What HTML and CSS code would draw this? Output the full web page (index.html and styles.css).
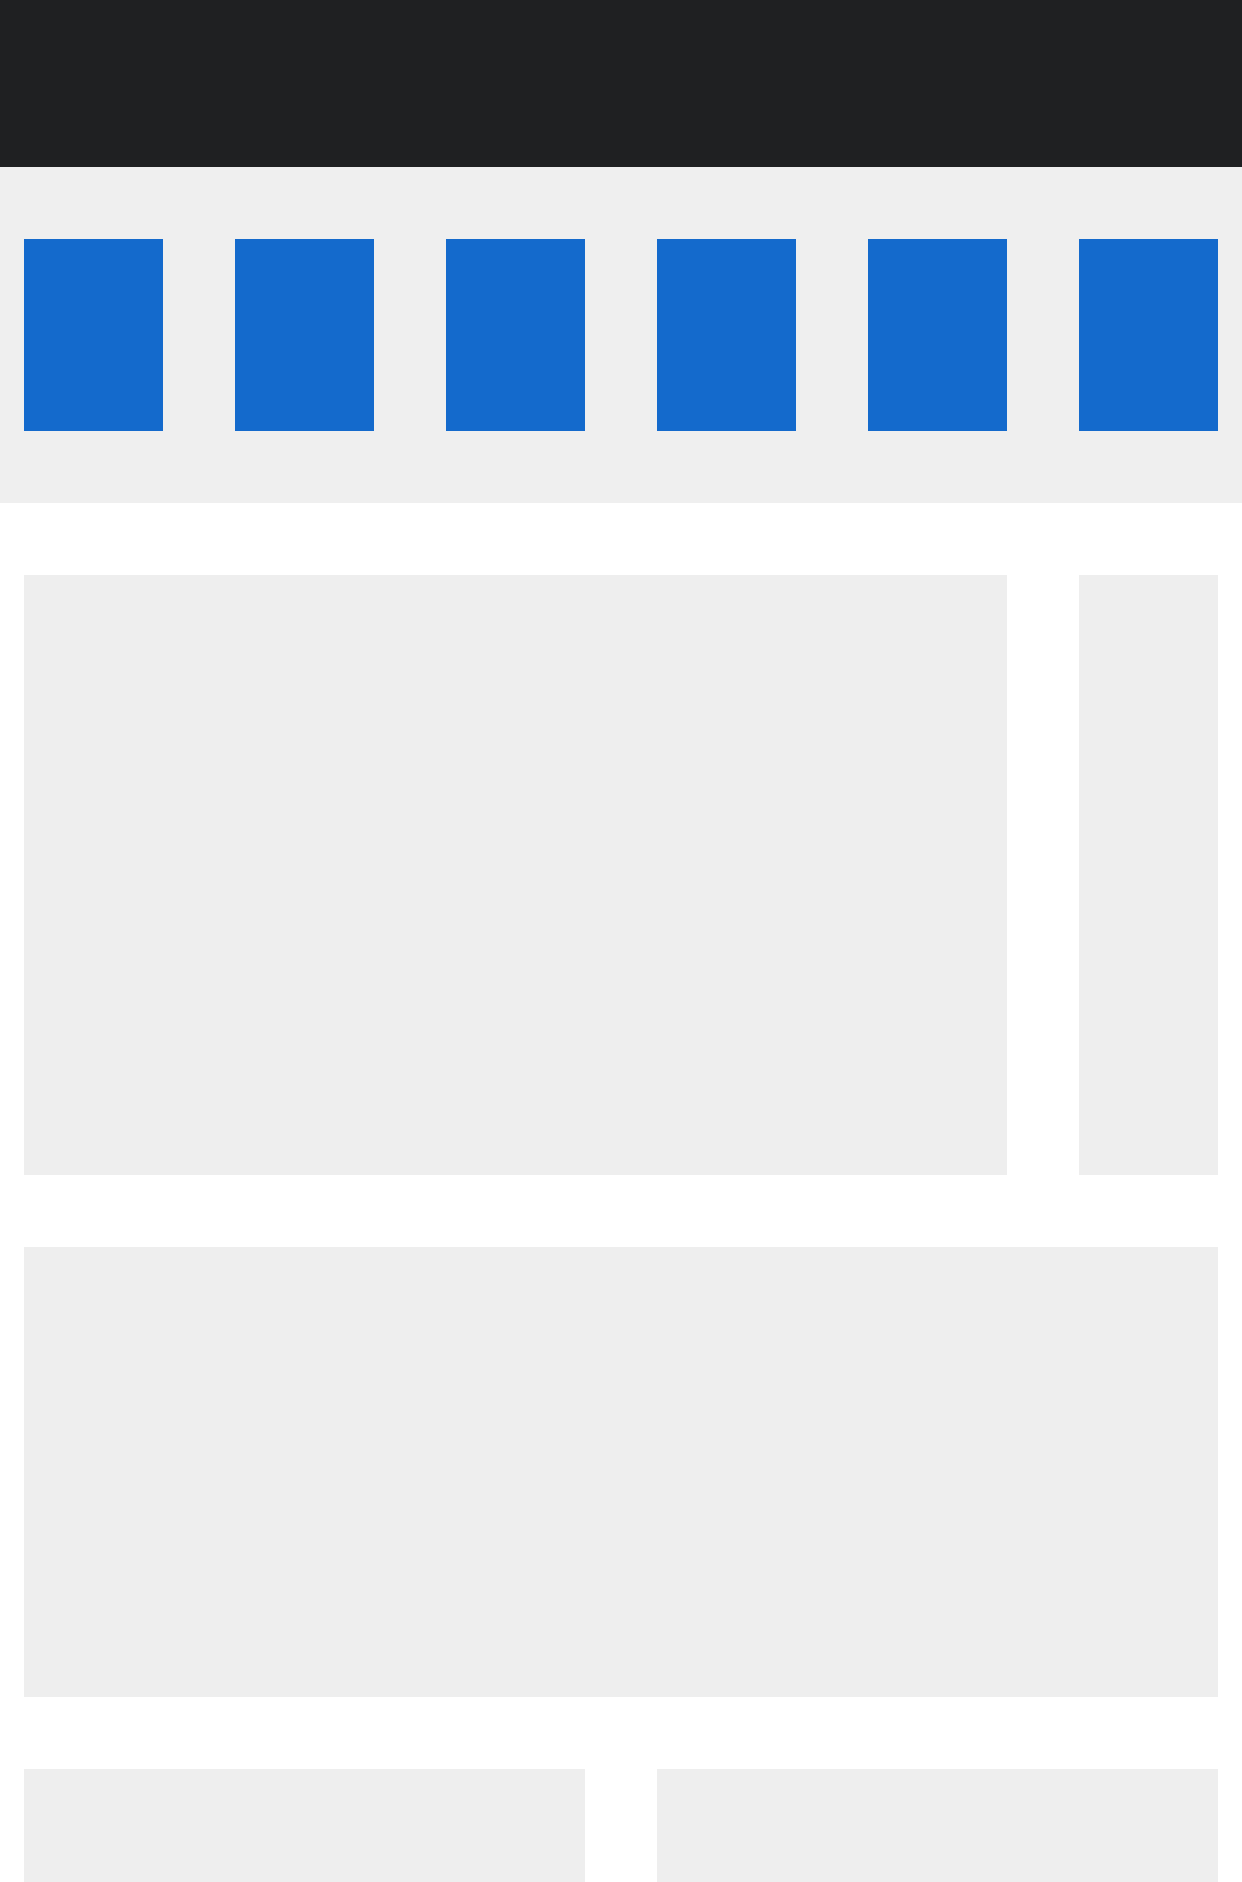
FILE: index.html
```html
<!DOCTYPE html>
<html lang="en">
<head>
<meta charset="utf-8">
<title>Layout</title>
<link rel="stylesheet" href="styles.css">
</head>
<body>
<header class="topbar"></header>
<section class="band">
  <div class="tile"></div>
  <div class="tile"></div>
  <div class="tile"></div>
  <div class="tile"></div>
  <div class="tile"></div>
  <div class="tile"></div>
</section>
<main class="content">
  <div class="card card-main"></div>
  <div class="card card-side"></div>
  <div class="card card-wide"></div>
  <div class="card card-half"></div>
  <div class="card card-half"></div>
</main>
</body>
</html>
```

FILE: styles.css
```css
html, body {
  margin: 0;
  padding: 0;
  background: #ffffff;
  font-family: "Liberation Sans", Arial, sans-serif;
}

.topbar {
  height: 167px;
  background: #1f2022;
}

.band {
  background: #efefef;
  padding: 72px 24px;
  display: grid;
  grid-template-columns: repeat(6, 139px);
  column-gap: 72px;
}

.tile {
  height: 192px;
  background: #146acc;
}

.content {
  padding: 72px 24px;
  display: grid;
  grid-template-columns: repeat(6, 139px);
  gap: 72px;
}

.card {
  background: #eeeeee;
}

.card-main {
  grid-column: span 5;
  height: 600px;
}

.card-side {
  grid-column: span 1;
  height: 600px;
}

.card-wide {
  grid-column: span 6;
  height: 450px;
}

.card-half {
  grid-column: span 3;
  height: 450px;
}
```
